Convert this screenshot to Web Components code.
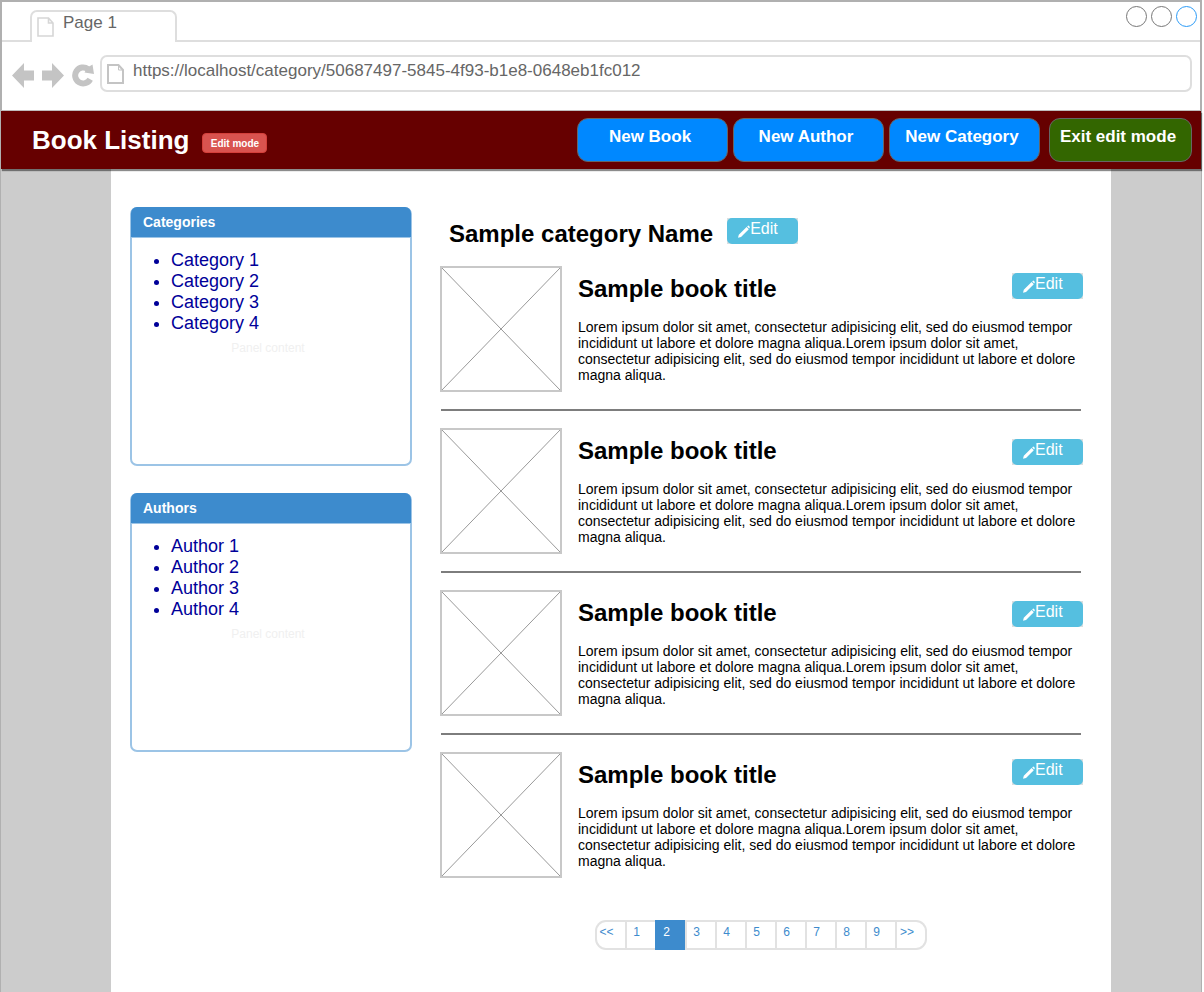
<!DOCTYPE html>
<html lang="en">
<head>
<meta charset="utf-8">
<title>Book Listing</title>
<style>
  body { margin: 0; background: #fff; color: #000; font-family: "Liberation Sans", Arial, sans-serif; }
</style>
</head>
<body>
<browser-window>
  <browser-chrome slot="chrome" label="Page 1" address="https://localhost/category/50687497-5845-4f93-b1e8-0648eb1fc012"></browser-chrome>
  <site-header slot="header">
    Book Listing
    <mode-badge slot="badge">Edit mode</mode-badge>
    <action-button slot="actions">New Book</action-button>
    <action-button slot="actions">New Author</action-button>
    <action-button slot="actions">New Category</action-button>
    <action-button slot="actions" kind="exit">Exit edit mode</action-button>
  </site-header>
  <page-columns>
    <side-panel slot="side" heading="Categories" items="Category 1,Category 2,Category 3,Category 4">Panel content</side-panel>
    <side-panel slot="side" heading="Authors" items="Author 1,Author 2,Author 3,Author 4">Panel content</side-panel>
    <category-heading>Sample category Name</category-heading>
    <book-item heading="Sample book title">Lorem ipsum dolor sit amet, consectetur adipisicing elit, sed do eiusmod tempor incididunt ut labore et dolore magna aliqua.Lorem ipsum dolor sit amet, consectetur adipisicing elit, sed do eiusmod tempor incididunt ut labore et dolore magna aliqua.</book-item>
    <book-item heading="Sample book title" edit="low">Lorem ipsum dolor sit amet, consectetur adipisicing elit, sed do eiusmod tempor incididunt ut labore et dolore magna aliqua.Lorem ipsum dolor sit amet, consectetur adipisicing elit, sed do eiusmod tempor incididunt ut labore et dolore magna aliqua.</book-item>
    <book-item heading="Sample book title" edit="low">Lorem ipsum dolor sit amet, consectetur adipisicing elit, sed do eiusmod tempor incididunt ut labore et dolore magna aliqua.Lorem ipsum dolor sit amet, consectetur adipisicing elit, sed do eiusmod tempor incididunt ut labore et dolore magna aliqua.</book-item>
    <book-item heading="Sample book title" last>Lorem ipsum dolor sit amet, consectetur adipisicing elit, sed do eiusmod tempor incididunt ut labore et dolore magna aliqua.Lorem ipsum dolor sit amet, consectetur adipisicing elit, sed do eiusmod tempor incididunt ut labore et dolore magna aliqua.</book-item>
    <page-nav pages="9" current="2"></page-nav>
  </page-columns>
</browser-window>

<script>
const define = (name, render) => customElements.define(name, class extends HTMLElement {
  connectedCallback() {
    if (!this.shadowRoot) this.attachShadow({ mode: 'open' }).innerHTML = render(this);
  }
});

define('browser-window', () => `
  <style>
    :host { display: flex; flex-direction: column; box-sizing: border-box; min-height: 100vh; margin-right: 2px; border: 1px solid #b0b0b0; border-bottom: 0; background: #ccc; }
  </style>
  <slot name="chrome"></slot>
  <slot name="header"></slot>
  <slot></slot>`);

define('browser-chrome', el => `
  <style>
    :host { display: block; background: #fff; border: 1px solid #b0b0b0; border-bottom: 0; color: #666; }
    button { padding: 0; border: 0; background: none; font: inherit; color: inherit; display: block; }
    svg { display: block; flex: none; }
    .strip { display: flex; justify-content: space-between; box-sizing: border-box; height: 40px; padding: 0 3px 0 28px; border-bottom: 2px solid #dedede; }
    .tab { display: flex; box-sizing: border-box; width: 147px; height: 32px; margin-top: 8px; padding: 5px 5px 0; gap: 9px;
      border: 2px solid #dedede; border-bottom: 0; border-radius: 7px 7px 0 0; background: #fff; font-size: 17px; line-height: 20px; }
    .tab span { margin-top: -4px; }
    .controls { display: flex; gap: 4px; padding-top: 4px; }
    .controls button { width: 21px; height: 21px; border: 1px solid #777; border-radius: 50%; }
    .controls button:last-child { border-color: #2b9bf7; }
    .bar { display: flex; align-items: center; padding: 13px 8px 18px 10px; }
    .nav { display: flex; gap: 8px; padding-top: 3px; margin-right: 4px; }
    .address { display: flex; flex: 1; box-sizing: border-box; height: 37px; padding: 7px 5px 0; gap: 9px; border: 2px solid #dedede; border-radius: 7px; }
    input { flex: 1; min-width: 0; height: 20px; box-sizing: border-box; margin-top: -3px; padding: 0; border: 0; outline: 0; background: none; color: inherit; font: 17px/20px "Liberation Sans", Arial, sans-serif; }
  </style>
  <div class="strip">
    <button class="tab" type="button">
      <svg width="17" height="20" viewBox="0 0 17 20" fill="none" stroke="#d6d6d6" stroke-width="1.6"><path d="M1 1h10.500l4.500 5v13H1zM11.500 1v5H16"/></svg>
      <span>${el.getAttribute('label')}</span>
    </button>
    <div class="controls">
      <button type="button" aria-label="Minimize"></button>
      <button type="button" aria-label="Maximize"></button>
      <button type="button" aria-label="Close"></button>
    </div>
  </div>
  <div class="bar">
    <div class="nav">
      <button type="button" aria-label="Back"><svg width="22" height="25" viewBox="0 0 22 25" fill="#c4c4c4"><path d="M0 12.500L12 0v7.500h10v10H12V25z"/></svg></button>
      <button type="button" aria-label="Forward"><svg width="22" height="25" viewBox="0 0 22 25" fill="#c4c4c4"><path d="M22 12.500L10 0v7.500H0v10h10V25z"/></svg></button>
      <button type="button" aria-label="Reload"><svg width="24" height="25" viewBox="0 0 24 25"><path d="M18.200 16.300A8 8 0 1 1 16 6.100" fill="none" stroke="#c4c4c4" stroke-width="6"/><path d="M20.500 1.500l1.500 9.500L12.500 9.500 15.500 4.500z" fill="#c4c4c4"/></svg></button>
    </div>
    <div class="address">
      <svg width="17" height="20" viewBox="0 0 17 20" fill="none" stroke="#c4c4c4"><path d="M1 1h10.500l4.500 5v13H1z" stroke-width="2"/><path d="M11.500 1v5H16"/></svg>
      <input type="text" aria-label="Address" value="${el.getAttribute('address')}">
    </div>
  </div>`);

define('site-header', () => `
  <style>
    :host { display: block; position: relative; border-top: 1px solid #c0bcbc; }
    header { display: flex; align-items: center; box-sizing: border-box; height: 58px; padding: 0 9px 0 31px; background: #600; box-shadow: 1px 2px 1px rgba(0,0,0,.45); }
    h1 { margin: 0 13px 0 0; font-size: 26px; line-height: 30px; color: #fff; white-space: nowrap; }
    .badge { margin-top: 6px; }
    nav { display: flex; gap: 5px; margin-left: auto; }
  </style>
  <header>
    <h1><slot></slot></h1>
    <div class="badge"><slot name="badge"></slot></div>
    <nav aria-label="Actions"><slot name="actions"></slot></nav>
  </header>`);

define('mode-badge', () => `
  <style>
    :host { display: block; box-sizing: border-box; width: 65px; height: 20px; border: 1px solid #d43f3a; border-radius: 4px; background: #d9534f; color: #fff; font-size: 10px; font-weight: bold; line-height: 19px; text-align: center; white-space: nowrap; }
  </style>
  <slot></slot>`);

define('action-button', () => `
  <style>
    :host { display: block; }
    :host([kind="exit"]) { margin-left: 4px; }
    button { display: block; box-sizing: border-box; width: 151px; height: 44px; padding: 0 5px 6px 0; border: 1px solid #666; border-radius: 11px; background: #08f; color: #fff; font: bold 17px/20px "Liberation Sans", Arial, sans-serif; white-space: nowrap; }
    :host([kind="exit"]) button { width: 143px; background: #360; }
  </style>
  <button type="button"><slot></slot></button>`);

define('page-columns', () => `
  <style>
    :host { display: grid; flex: 1; grid-template-columns: minmax(0, 11fr) minmax(0, 1000px) minmax(0, 9fr); }
    .content { grid-column: 2; display: grid; grid-template-columns: 282px minmax(0, 1fr); gap: 28px; align-items: start; box-sizing: border-box; padding: 38px 27px 42px 19px; background: #fff; }
    aside { display: grid; gap: 27px; }
  </style>
  <div class="content">
    <aside><slot name="side"></slot></aside>
    <main><slot></slot></main>
  </div>`);

define('side-panel', el => `
  <style>
    :host { display: block; box-sizing: border-box; min-height: 259px; border: 2px solid #9cc4e6; border-radius: 7px; background: #fff; }
    h2 { margin: -2px -1px 0; padding: 1px 12px 0; background: #3d8bcd; border-radius: 6px 6px 0 0; color: #fff; font-size: 14px; line-height: 29px; border-bottom: 1px solid #9cc4e6; }
    ul { margin: 12px 0 7px; padding-left: 39px; color: #009; font-size: 18px; line-height: 21px; }
    a { color: inherit; text-decoration: none; }
    p { margin: 0; padding-right: 6px; color: #f0f0f0; font-size: 12px; line-height: 14px; text-align: center; }
  </style>
  <h2>${el.getAttribute('heading')}</h2>
  <ul>${el.getAttribute('items').split(',').map(t => `<li><a href="#">${t}</a></li>`).join('')}</ul>
  <p><slot></slot></p>`);

define('edit-button', () => `
  <style>
    :host { display: block; flex: none; background: #d9dfe0; }
    button { display: flex; box-sizing: border-box; width: 71px; height: 26px; padding: 2px 0 0 11px; border: 0; border-radius: 5px; background: #55bfe0; color: #fff; font: 16px/18px "Liberation Sans", Arial, sans-serif; }
    svg { display: block; margin-top: 5px; }
  </style>
  <button type="button"><svg width="12" height="13" viewBox="0 0 12 13" fill="#fff"><path d="M0 12.800l.8-3L8.600 2l2.200 2.200L3 12zM9.200 1.400l.7-.7q.4-.4.8 0l1 1q.4.400 0 .8l-.5.900z"/></svg>Edit</button>`);

define('category-heading', () => `
  <style>
    :host { display: flex; align-items: flex-start; gap: 14px; padding: 11px 0 16px 9px; }
    h1 { margin: 0; font-size: 24px; line-height: 32px; }
  </style>
  <h1><slot></slot></h1>
  <edit-button></edit-button>`);

define('book-item', el => `
  <style>
    :host { display: block; }
    article { display: grid; grid-template-columns: 122px minmax(0, 1fr); gap: 16px; }
    .cover { display: block; box-sizing: border-box; width: 122px; height: 126px; border: 2px solid #c8c8c8; }
    .head { display: flex; justify-content: space-between; align-items: flex-start; height: 37px; margin-bottom: 16px; padding-right: 1px; }
    h2 { margin: 0; padding-top: 9px; font-size: 24px; line-height: 28px; }
    edit-button { margin-top: 7px; }
    :host([edit="low"]) edit-button { margin-top: 11px; }
    p { margin: 0; padding-right: 4px; font-size: 14px; line-height: 16px; }
    hr { height: 2px; margin: 17px 3px 17px 1px; border: 0; background: #7d7d7d; }
    :host([last]) hr { display: none; }
  </style>
  <article>
    <svg class="cover" viewBox="0 0 118 122" preserveAspectRatio="none" role="img" aria-label="Book cover"><path d="M0 0L118 122M118 0L0 122" stroke="#999" fill="none"/></svg>
    <div>
      <div class="head"><h2>${el.getAttribute('heading')}</h2><edit-button></edit-button></div>
      <p><slot></slot></p>
    </div>
  </article>
  <hr>`);

define('page-nav', el => {
  const current = el.getAttribute('current');
  const labels = ['&lt;&lt;'];
  for (let i = 1; i <= +el.getAttribute('pages'); i++) labels.push(String(i));
  labels.push('&gt;&gt;');
  return `
  <style>
    :host { display: flex; justify-content: center; margin-top: 42px; padding-right: 2px; }
    nav { display: flex; overflow: hidden; box-sizing: border-box; height: 30px; border-radius: 11px; box-shadow: inset 0 0 0 2px #e2e2e2; }
    a { box-sizing: border-box; width: 30px; height: 30px; padding: 5px 9px 0 0; border-left: 2px solid #e2e2e2; color: #3d8bcd; font-size: 12px; line-height: 14px; text-align: center; text-decoration: none; }
    a:first-child { border-left-color: transparent; }
    a:last-child { width: 32px; padding-right: 10px; }
    a[aria-current] { background: #3d8bcd; border-color: #3d8bcd; color: #fff; }
  </style>
  <nav aria-label="Pages">${labels.map(t => `<a href="#"${t === current ? ' aria-current="page"' : ''}>${t}</a>`).join('')}</nav>`;
});
</script>
</body>
</html>
